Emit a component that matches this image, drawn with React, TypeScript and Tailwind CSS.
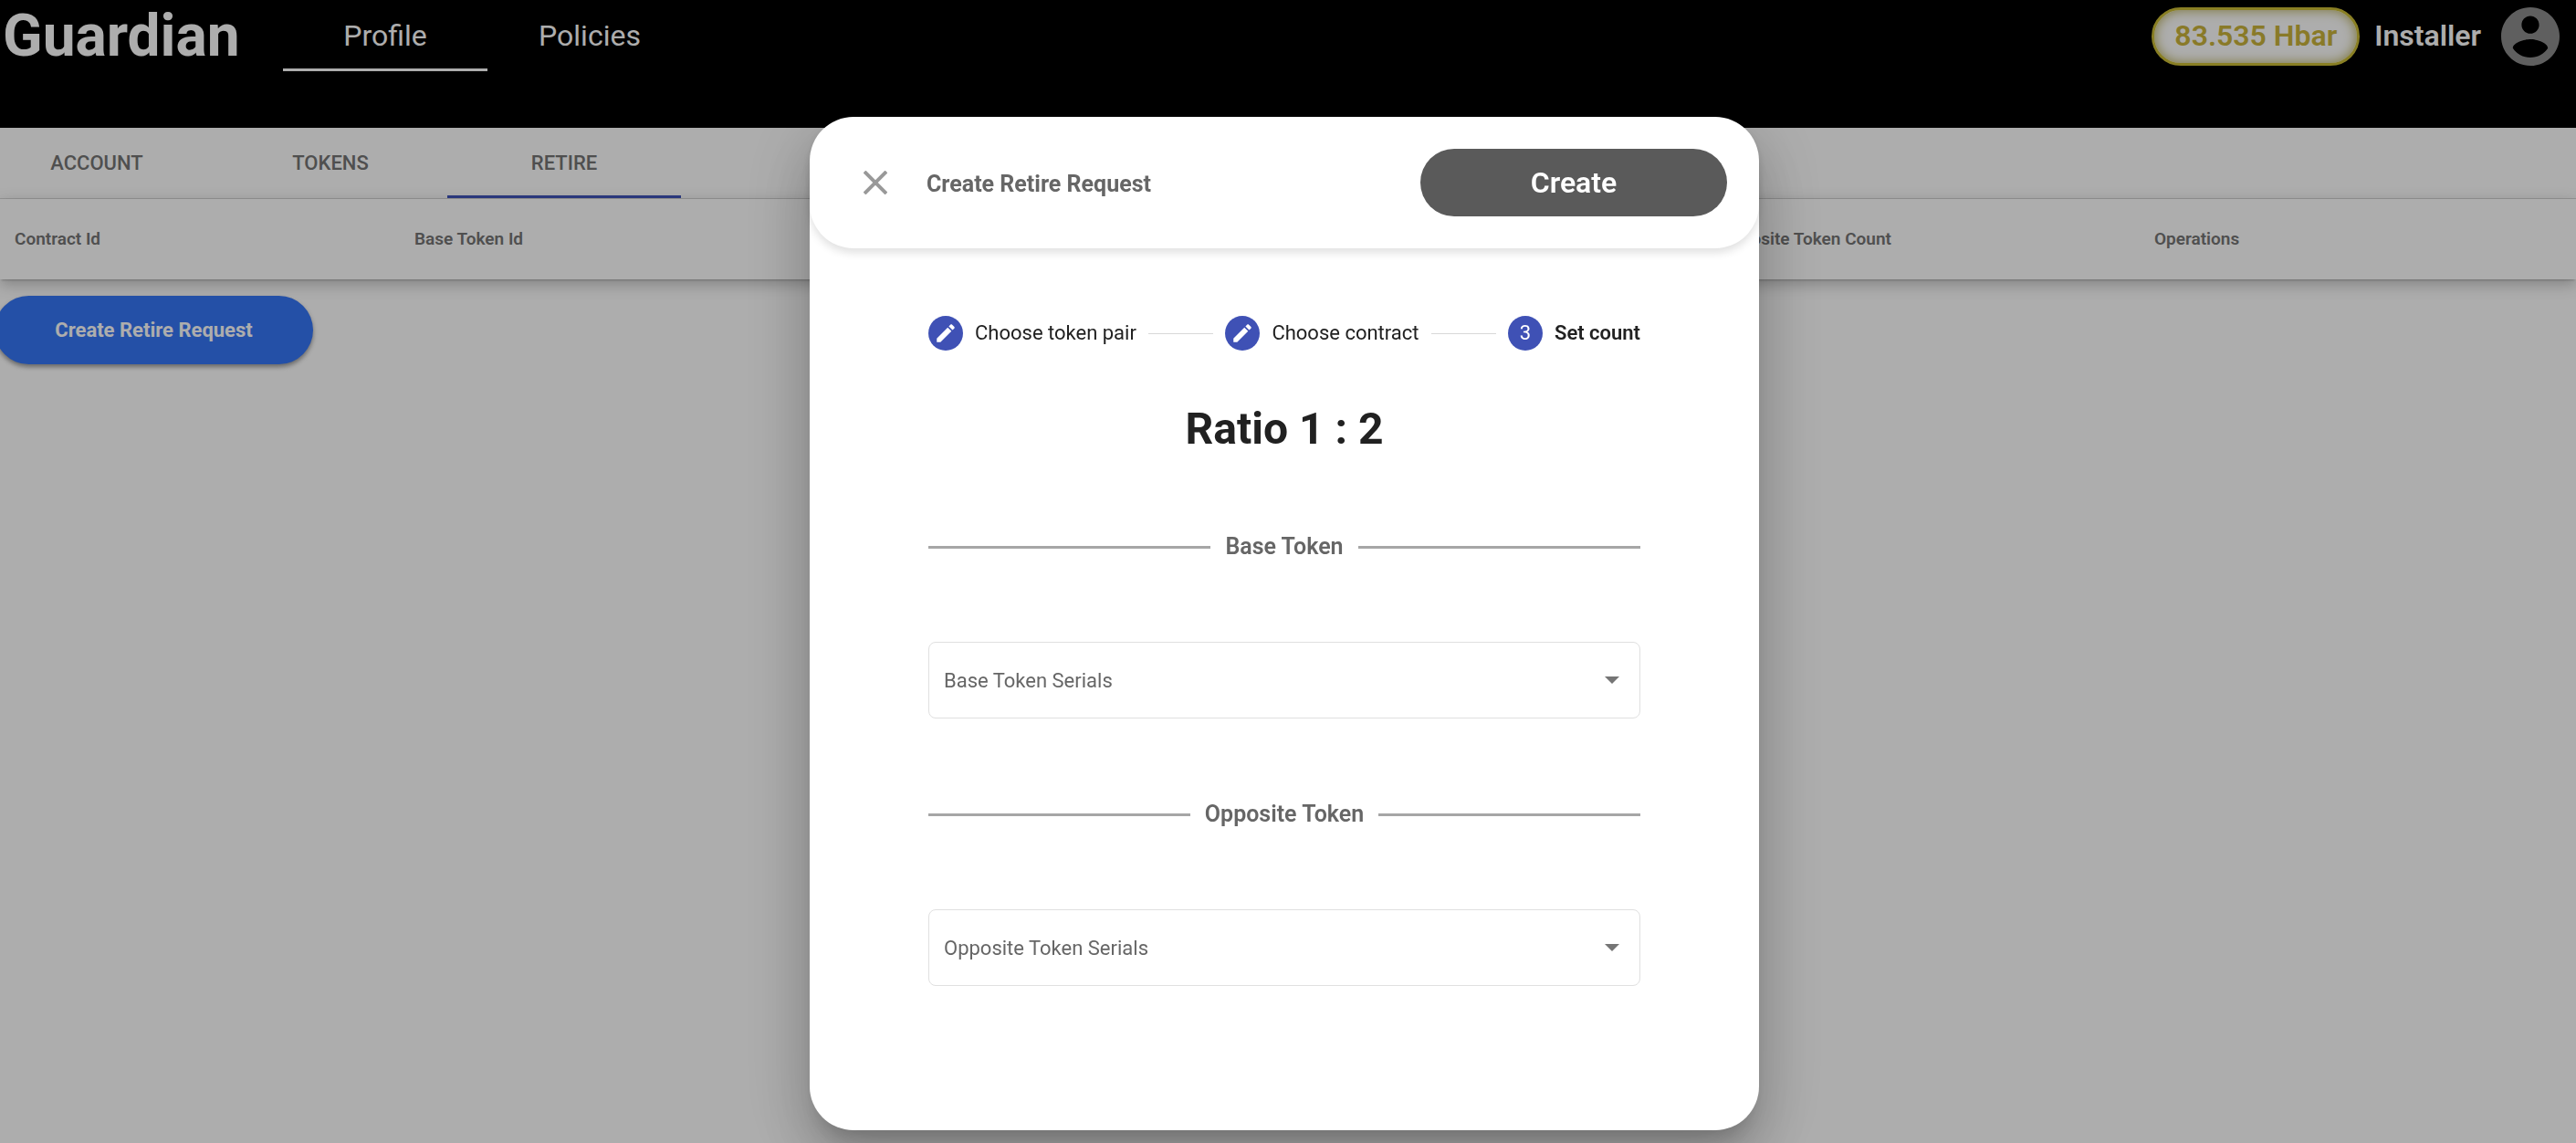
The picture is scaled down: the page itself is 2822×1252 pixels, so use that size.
import React from "react";

const columns = [
  { name: "Contract Id", width: "w-[438px]" },
  { name: "Base Token Id", width: "w-[478px]" },
  { name: "Opposite Token Id", width: "w-[478px]" },
  { name: "Base Token Count", width: "w-[474px]" },
  { name: "Opposite Token Count", width: "w-[476px]" },
  { name: "Operations", width: "" },
];

function AccountIcon() {
  return (
    <svg viewBox="2 2 20 20" className="size-16 fill-[#8c8c8c]" aria-hidden="true">
      <path d="M12 2C6.48 2 2 6.48 2 12s4.48 10 10 10 10-4.48 10-10S17.52 2 12 2zm0 3c1.66 0 3 1.34 3 3s-1.34 3-3 3-3-1.34-3-3 1.34-3 3-3zm0 14.200c-2.500 0-4.710-1.280-6-3.220.030-1.990 4-3.080 6-3.080 1.990 0 5.970 1.090 6 3.080-1.290 1.940-3.500 3.220-6 3.220z" />
    </svg>
  );
}

function PencilIcon() {
  return (
    <svg viewBox="0 0 24 24" className="size-[26px] fill-white" aria-hidden="true">
      <path d="M3 17.250V21h3.750L17.810 9.940l-3.750-3.750L3 17.250zM20.710 7.040c.390-.390.390-1.020 0-1.410l-2.340-2.340c-.390-.390-1.020-.390-1.410 0l-1.830 1.830 3.750 3.750 1.830-1.830z" />
    </svg>
  );
}

function Header() {
  return (
    <header className="flex h-[140px] items-start bg-black text-white">
      <h1 className="ml-[3px] mt-[2px] w-[307px] text-[64px] leading-[76px] font-bold">Guardian</h1>
      <nav className="flex text-[32px] leading-[36px]">
        <a href="#profile" className="flex h-[78px] w-56 items-center justify-center border-b-3 border-white pt-[2px]">
          Profile
        </a>
        <a href="#policies" className="flex h-[78px] w-56 items-center justify-center border-b-3 border-transparent pt-[2px]">
          Policies
        </a>
      </nav>
      <div className="ml-auto mr-[18px] mt-2 flex items-center text-[32px] leading-[36px] font-semibold">
        <span className="flex h-16 items-center rounded-full border-3 border-[#cbbc35] bg-white px-[22px] pb-[2px] text-[#cbb43c] shadow-[inset_0_0_13px_#b5ab50]">
          83.535 Hbar
        </span>
        <span className="ml-4 mr-[22px] pb-[2px]">Installer</span>
        <button type="button" aria-label="Account">
          <AccountIcon />
        </button>
      </div>
    </header>
  );
}

function Tab({ name, active = false }: { name: string; active?: boolean }) {
  return (
    <a
      href={"#" + name.toLowerCase()}
      className={
        active
          ? "flex h-[77px] w-64 items-center justify-center border-b-3 border-[#3f51b5] pt-[3px]"
          : "flex h-[77px] w-64 items-center justify-center border-b-3 border-transparent pt-[3px]"
      }
    >
      {name}
    </a>
  );
}

function Step({ label, children, current = false }: { label: string; children: React.ReactNode; current?: boolean }) {
  return (
    <li className="flex items-center gap-[13px]" aria-current={current ? "step" : undefined}>
      <span className="flex size-[38px] items-center justify-center rounded-full bg-[#3f51b5] text-white">
        {children}
      </span>
      <span className={current ? "font-semibold" : ""}>{label}</span>
    </li>
  );
}

function TokenSection({ title, id }: { title: string; id: string }) {
  return (
    <section className="mb-[90px]">
      <h3 className="flex items-center gap-4 text-[25px] leading-[30px] font-semibold text-[#666]">
        <span className="h-[3px] flex-1 bg-[#a6a6a6]" />
        <label htmlFor={id}>{title}</label>
        <span className="h-[3px] flex-1 bg-[#a6a6a6]" />
      </h3>
      <div className="relative mt-[89px]">
        <select
          id={id}
          className="block h-[84px] w-full appearance-none rounded-lg border border-[#e0e0e0] bg-white px-4 text-[22px] text-[#666]"
        >
          <option>{title} Serials</option>
        </select>
        <svg viewBox="0 0 16 8" className="pointer-events-none absolute right-[23px] top-[38px] h-2 w-4 fill-[#757575]">
          <path d="M0 0h16L8 8z" />
        </svg>
      </div>
    </section>
  );
}

function RetireDialog() {
  return (
    <div
      role="dialog"
      aria-modal="true"
      aria-labelledby="dialog-title"
      className="w-[1040px] rounded-[48px] bg-white text-[#212121] shadow-[0_18px_24px_-11px_rgba(0,0,0,0.2),0_38px_61px_5px_rgba(0,0,0,0.14),0_14px_74px_13px_rgba(0,0,0,0.12)]"
    >
      <div className="flex h-36 items-center rounded-[48px] pl-[59px] pr-[35px] shadow-[0_5px_10px_rgba(0,0,0,0.12)]">
        <button type="button" aria-label="Close">
          <svg viewBox="0 0 26 26" className="size-[26px] fill-none stroke-[#999] stroke-[4]" aria-hidden="true">
            <path d="M1 1l24 24M25 1L1 25" />
          </svg>
        </button>
        <h2 id="dialog-title" className="ml-[43px] pt-[3px] text-[25px] leading-[30px] font-bold text-[#666]">
          Create Retire Request
        </h2>
        <button
          type="button"
          className="ml-auto h-[74px] w-[336px] rounded-full bg-[#5a5a5a] text-[32px] leading-[36px] font-semibold text-white"
        >
          Create
        </button>
      </div>
      <div className="px-[130px] pb-[68px] pt-[74px]">
        <ol className="flex items-center gap-[13px] text-[22px] leading-[26px] whitespace-nowrap">
          <Step label="Choose token pair">
            <PencilIcon />
          </Step>
          <li role="presentation" className="h-px flex-1 bg-[#d8d8d8]" />
          <Step label="Choose contract">
            <PencilIcon />
          </Step>
          <li role="presentation" className="h-px flex-1 bg-[#d8d8d8]" />
          <Step label="Set count" current>
            3
          </Step>
        </ol>
        <p className="mb-[84px] mt-14 text-center text-[48px] leading-[60px] font-bold">Ratio 1 : 2</p>
        <TokenSection title="Base Token" id="base-serials" />
        <TokenSection title="Opposite Token" id="opposite-serials" />
      </div>
    </div>
  );
}

export default function App() {
  return (
    <div className="min-h-screen overflow-hidden bg-white font-['Roboto',sans-serif]">
      <Header />
      <main>
        <nav className="flex h-[78px] border-b border-[#dcdcdc] text-[22px] leading-[26px] font-medium text-[#757575]">
          <div className="-ml-[22px] flex">
            <Tab name="ACCOUNT" />
            <Tab name="TOKENS" />
            <Tab name="RETIRE" active />
          </div>
        </nav>
        <table className="w-full table-fixed text-left shadow-[0_3px_2px_-2px_rgba(0,0,0,0.2),0_5px_16px_rgba(0,0,0,0.26)]">
          <thead>
            <tr className="h-[88px]">
              {columns.map((c) => (
                <th key={c.name} className={c.width + " pl-4 text-[19px] leading-6 font-semibold text-[#757575]"}>
                  {c.name}
                </th>
              ))}
            </tr>
          </thead>
        </table>
        <button
          type="button"
          className="-ml-[6px] mt-[18px] h-[75px] w-[349px] rounded-full bg-[#3576f7] text-[22px] leading-7 font-bold text-white shadow-[0_3px_5px_rgba(0,0,0,0.4)]"
        >
          Create Retire Request
        </button>
      </main>
      <div className="fixed inset-0 flex items-start justify-center bg-black/32 pr-2 pt-32">
        <RetireDialog />
      </div>
    </div>
  );
}
